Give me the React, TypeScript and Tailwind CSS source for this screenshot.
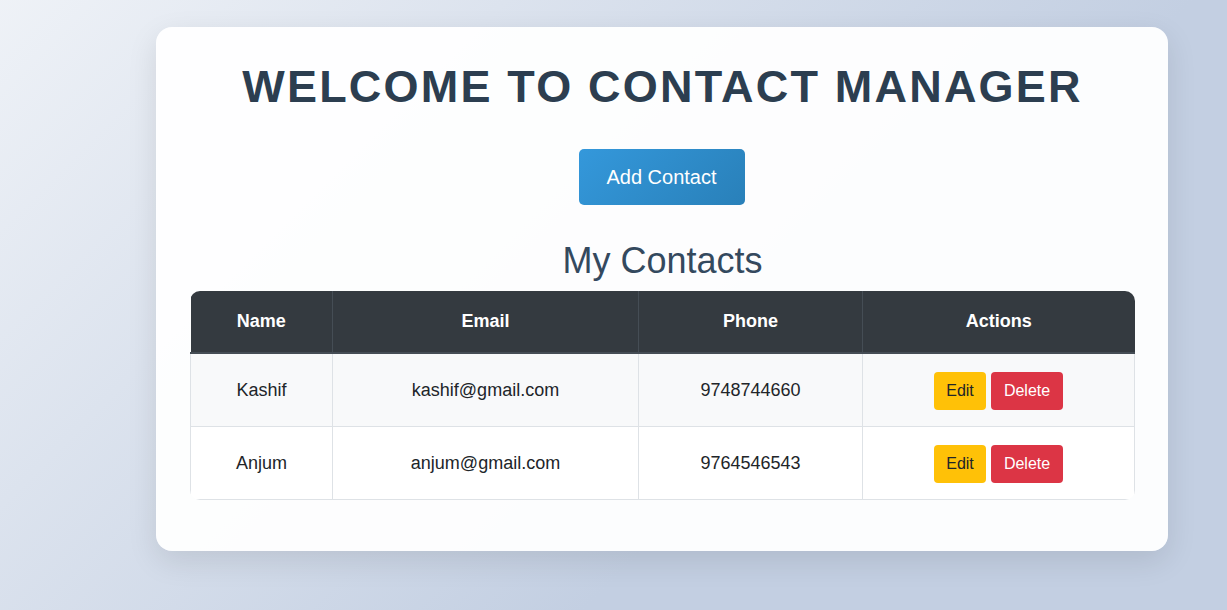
import React from 'react';

const CONTACTS = [
  { id: 1, name: 'Kashif', email: 'kashif@gmail.com', phone: '9748744660' },
  { id: 2, name: 'Anjum', email: 'anjum@gmail.com', phone: '9764546543' },
];

export default function App() {
  return (
    <div className="min-h-screen bg-[linear-gradient(135deg,#f5f7fa_-10%,#c3cfe2_65%)] pt-[27px] pl-[156px] font-['Liberation_Sans',Arial,sans-serif]">
      <div className="w-[1012px] rounded-2xl bg-white/95 pl-[34px] pr-[33px] pt-[33px] pb-[51px] shadow-[0_10px_30px_rgba(0,0,0,0.1)]">
        <h1 className="text-center text-[45px] leading-[1.2] font-bold tracking-[2.2px] text-[#2c3e50]">
          WELCOME TO CONTACT MANAGER
        </h1>

        <div className="mt-[35px] flex justify-center pr-[2px]">
          <button className="h-[56px] w-[166px] rounded-[5px] bg-[linear-gradient(135deg,#3498db,#2980b9)] text-[20px] text-white">
            Add Contact
          </button>
        </div>

        <h2 className="mt-[34px] text-center text-[36px] leading-[1.2] text-[#34495e]">My Contacts</h2>

        <div className="mt-[9px] overflow-hidden rounded-[10px]">
          <table className="w-full table-fixed border-collapse text-[18px] text-[#212529]">
            <thead>
              <tr className="h-[62px] bg-[#343a40] text-white">
                <th className="w-[142px] border-r border-b-2 border-[#454d55] font-bold">Name</th>
                <th className="w-[306px] border-r border-b-2 border-[#454d55] font-bold">Email</th>
                <th className="w-[224px] border-r border-b-2 border-[#454d55] font-bold">Phone</th>
                <th className="border-b-2 border-[#454d55] font-bold">Actions</th>
              </tr>
            </thead>
            <tbody>
              {CONTACTS.map((c, i) => (
                <tr key={c.id} className={`h-[73px] ${i % 2 === 0 ? 'bg-[#f8f9fa]' : 'bg-white'}`}>
                  <td className="border border-[#dee2e6] pt-[2px] text-center">{c.name}</td>
                  <td className="border border-[#dee2e6] pt-[2px] text-center">{c.email}</td>
                  <td className="border border-[#dee2e6] pt-[2px] text-center">{c.phone}</td>
                  <td className="border border-[#dee2e6] pt-[2px] text-center">
                    <div className="flex justify-center gap-[5px]">
                      <button className="h-[38px] w-[52px] rounded-[4px] bg-[#ffc107] text-[16px] text-[#212529]">Edit</button>
                      <button className="h-[38px] w-[72px] rounded-[4px] bg-[#dc3545] text-[16px] text-white">Delete</button>
                    </div>
                  </td>
                </tr>
              ))}
            </tbody>
          </table>
        </div>
      </div>
    </div>
  );
}
